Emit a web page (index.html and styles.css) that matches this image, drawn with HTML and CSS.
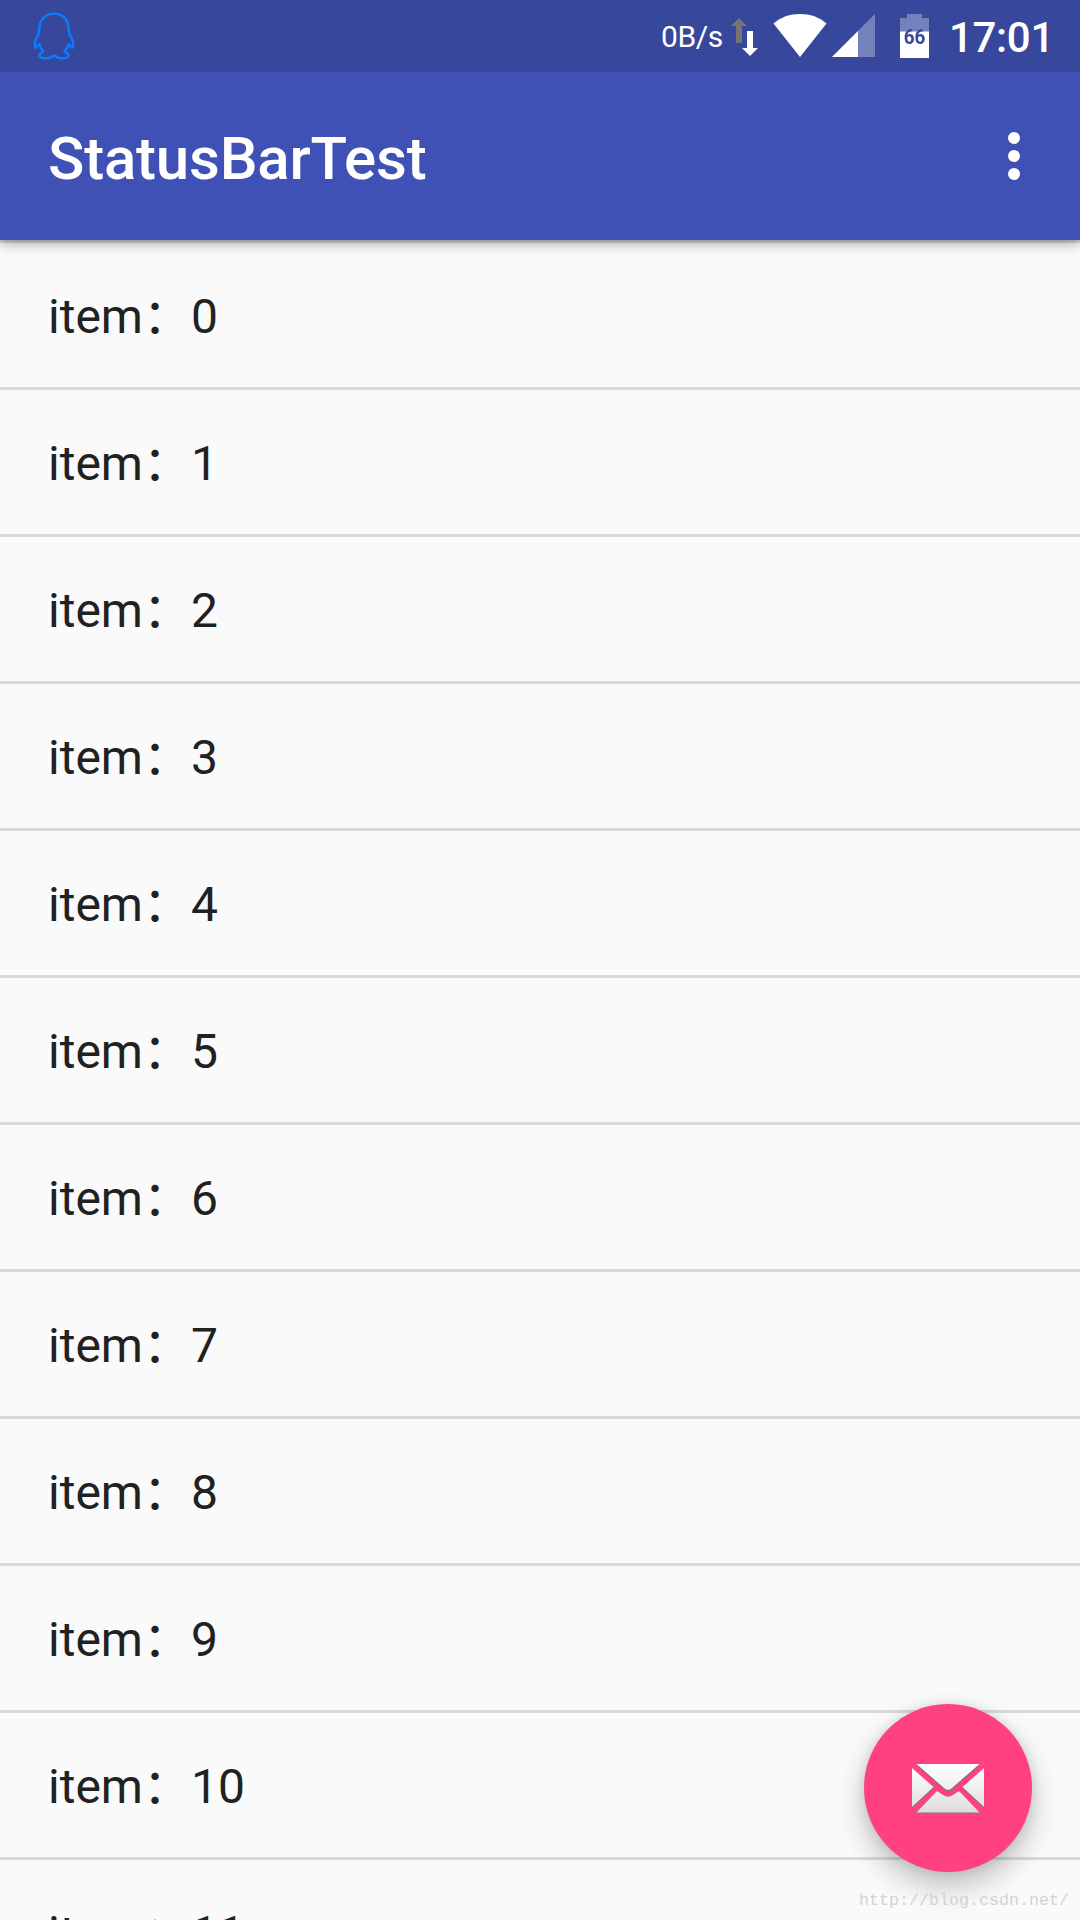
FILE: index.html
```html
<!DOCTYPE html>
<html lang="zh-CN">
<head>
<meta charset="utf-8">
<title>StatusBarTest</title>
<link rel="stylesheet" href="styles.css">
</head>
<body>
<div class="screen">
  <header class="status-bar">
    <svg class="penguin" width="44" height="50" viewBox="0 0 44 50" fill="none" stroke="#0a7cff" stroke-width="2.4" stroke-linejoin="round">
      <path d="M22 1.600C13 1.600 7.500 8 7.500 16V18C6.500 19.500 6.500 20.500 6.800 22C4 26 2.800 29.500 2.800 33C2.800 36 3.600 36.500 5 35C6 34 6.800 33 7.300 32C8 35 9.500 37.500 11.500 39.500C9.500 40.500 7.500 41.500 7.500 43.300C7.500 45.500 10 46.400 14 46.400C17.500 46.400 19.500 45.500 20.500 43.700H23.500C24.500 45.500 26.500 46.400 30 46.400C34 46.400 36.500 45.500 36.500 43.300C36.500 41.500 34.500 40.500 32.500 39.500C34.500 37.500 36 35 36.700 32C37.200 33 38 34 39 35C40.400 36.500 41.200 36 41.200 33C41.200 29.500 40 26 37.200 22C37.500 20.500 37.500 19.500 36.500 18V16C36.500 8 31 1.600 22 1.600Z"/>
    </svg>
    <div class="indicators">
      <span class="speed">0B/s</span>
      <svg class="traffic" width="28" height="38" viewBox="0 0 28 38">
        <path fill="#757575" d="M8 0L16 8H11V25H5V8H0Z"/>
        <path fill="#fff" d="M16 13H22V30H27L19 38L11 30H16Z"/>
      </svg>
      <svg class="wifi" width="54" height="44" viewBox="0 0 54 44">
        <path fill="#fff" d="M27 44L.5 10.500C8 4 17 1 27 1S46 4 53.500 10.500Z"/>
      </svg>
      <svg class="signal" width="43" height="43" viewBox="0 0 43 43">
        <path fill="#7581bb" d="M43 0V43H0Z"/>
        <path fill="#fff" d="M26 17V43H0Z"/>
      </svg>
      <div class="battery">
        <svg width="29" height="44" viewBox="0 0 29 44">
          <path fill="#7581bb" d="M7 0H22V4H29V18H0V4H7Z"/>
          <path fill="#fff" d="M0 17.500H29V44H0Z"/>
        </svg>
        <span class="battery-level">66</span>
      </div>
      <span class="clock">17:01</span>
    </div>
  </header>
  <div class="app-bar">
    <h1 class="title">StatusBarTest</h1>
    <svg class="overflow" width="12" height="48" viewBox="0 0 12 48" fill="#fff">
      <circle cx="6" cy="6" r="6"/><circle cx="6" cy="24" r="6"/><circle cx="6" cy="42" r="6"/>
    </svg>
  </div>
  <ul class="list">
    <li class="item">item：0</li>
    <li class="item">item：1</li>
    <li class="item">item：2</li>
    <li class="item">item：3</li>
    <li class="item">item：4</li>
    <li class="item">item：5</li>
    <li class="item">item：6</li>
    <li class="item">item：7</li>
    <li class="item">item：8</li>
    <li class="item">item：9</li>
    <li class="item">item：10</li>
    <li class="item">item：11</li>
  </ul>
  <div class="fab">
    <svg class="mail" width="72" height="52" viewBox="0 0 72 52">
      <defs>
        <linearGradient id="paper" gradientUnits="userSpaceOnUse" x1="0" y1="0" x2="0" y2="50">
          <stop offset="0" stop-color="#fff"/><stop offset=".25" stop-color="#f8f8f8"/><stop offset="1" stop-color="#dcdcdc"/>
        </linearGradient>
        <filter id="edge" x="-10%" y="-10%" width="120%" height="120%"><feGaussianBlur stdDeviation=".7"/></filter>
      </defs>
      <g fill="#857078" filter="url(#edge)">
        <path d="M4 2H68L40 26.500Q36 30.500 32 26.500Z"/>
        <path d="M0 6L22 25L0 45.500Z"/>
        <path d="M72 6L50 25L72 45.500Z"/>
        <path d="M4 50L25 28L31 32Q36 35.500 41 32L47 28L68 50Z"/>
      </g>
      <g fill="url(#paper)">
        <path d="M4.500 1H67.500L40 25Q36 29 32 25Z"/>
        <path d="M0 5L21.500 24L0 44Z"/>
        <path d="M72 5L50.500 24L72 44Z"/>
        <path d="M4.500 49.500L25 28L31 32Q36 35.500 41 32L47 28L67.500 49.500Z"/>
      </g>
    </svg>
  </div>
  <span class="watermark">http://blog.csdn.net/</span>
</div>
</body>
</html>
```
FILE: styles.css
```css
body {
  margin: 0;
  font-family: Roboto, "Noto Sans CJK SC", sans-serif;
}

.screen {
  position: relative;
  width: 1080px;
  height: 1920px;
  overflow: hidden;
  background: #fafafa;
}

.status-bar {
  position: relative;
  z-index: 2;
  display: flex;
  align-items: flex-start;
  justify-content: space-between;
  height: 72px;
  padding-left: 32px;
  padding-right: 26px;
  box-sizing: border-box;
  background: #37479b;
  color: #fff;
}

.penguin {
  margin-top: 12px;
}

.indicators {
  display: flex;
  align-items: flex-start;
}

.speed {
  margin-top: 19px;
  font-size: 30px;
  letter-spacing: -.4px;
  line-height: 35px;
}

.traffic {
  margin: 18px 0 0 8px;
}

.wifi {
  margin: 13px 0 0 14px;
}

.signal {
  margin: 14px 0 0 5px;
}

.battery {
  position: relative;
  width: 29px;
  height: 44px;
  margin: 14px 0 0 25px;
}

.battery svg {
  display: block;
}

.battery-level {
  position: absolute;
  top: 11px;
  left: 0;
  width: 29px;
  color: #37479b;
  font-size: 21px;
  font-weight: 700;
  line-height: 24px;
  text-align: center;
  transform: scaleX(.9);
}

.clock {
  margin: 13px 0 0 20px;
  font-size: 42px;
  font-weight: 500;
  letter-spacing: -.3px;
  line-height: 49px;
}

.app-bar {
  position: relative;
  z-index: 1;
  display: flex;
  align-items: center;
  justify-content: space-between;
  height: 168px;
  padding: 0 60px 0 48px;
  box-sizing: border-box;
  background: #3f51b5;
  box-shadow: 0 4px 12px rgba(0, 0, 0, .3), 0 1px 4px rgba(0, 0, 0, .08);
}

.title {
  margin: 5px 0 0;
  color: #fff;
  font-size: 60px;
  font-weight: 500;
  letter-spacing: -.2px;
  line-height: 71px;
}

.list {
  margin: 0;
  padding: 0;
  list-style: none;
}

.item {
  height: 144px;
  padding-left: 48px;
  border-top: 3px solid #dadada;
  color: #212121;
  font-size: 48px;
  line-height: 147px;
}

.fab {
  position: absolute;
  z-index: 2;
  top: 1704px;
  left: 864px;
  display: flex;
  align-items: center;
  justify-content: center;
  width: 168px;
  height: 168px;
  border-radius: 50%;
  background: #ff4081;
  box-shadow: 0 14px 30px rgba(0, 0, 0, .24), 0 0 12px rgba(0, 0, 0, .1);
}

.mail {
  margin-top: 2px;
}

.watermark {
  position: absolute;
  z-index: 3;
  top: 1890px;
  left: 859px;
  color: #d3d3d0;
  font-family: "Liberation Mono", monospace;
  font-size: 16.67px;
  line-height: 22px;
}
```
